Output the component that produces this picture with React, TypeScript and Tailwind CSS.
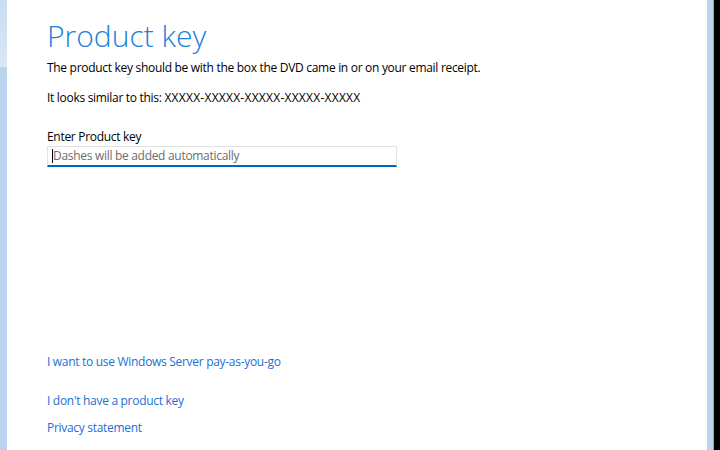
export default function App() {
  return (
    <div className="flex h-[450px] w-[720px] bg-white" style={{ fontFamily: '"Open Sans", "Noto Sans", sans-serif' }}>
      <div className="flex w-[7px] flex-col bg-[#bbd4ee]">
        <div className="h-[67px] bg-gradient-to-b from-[#c8dcf1] to-[#d9e7f6]" />
      </div>
      <div className="flex flex-1 flex-col pl-[40px] tracking-[-0.3px]">
        <h1 className="mt-[14px] text-[30px] font-light leading-[44px] tracking-normal text-[#2180d8]" style={{ fontFamily: '"Open Sans", sans-serif' }}>
          Product key
        </h1>
        <p className="mt-[2px] text-[12px] leading-[16px] text-black">
          The product key should be with the box the DVD came in or on your email receipt.
        </p>
        <p className="mt-[14px] text-[12px] leading-[16px] text-black">
          It looks similar to this: <span className="tracking-[0.25px]">XXXXX-XXXXX-XXXXX-XXXXX-XXXXX</span>
        </p>
        <label className="mt-[23px] text-[12px] leading-[16px] text-black">Enter Product key</label>
        <div className="mt-[1px] flex h-[21px] w-[350px] items-center border border-b-2 border-[#e2e2e2] border-b-[#0067c0] pl-[4px]">
          <span className="h-[14px] w-px bg-black" />
          <span className="text-[12px] leading-[16px] text-[#6d6d6d]">Dashes will be added automatically</span>
        </div>
        <div className="flex-1" />
        <a className="text-[12px] leading-[16px] text-[#1a6fd6]">I want to use Windows Server pay-as-you-go</a>
        <a className="mt-[23px] text-[12px] leading-[16px] text-[#1a6fd6]">I don&apos;t have a product key</a>
        <a className="mt-[11px] mb-[14px] text-[12px] leading-[16px] text-[#1a6fd6]">Privacy statement</a>
      </div>
      <div className="w-[6px] bg-[#bbd4ee]" />
      <div className="w-px bg-[#4fc3e8]" />
      <div className="w-[6px] bg-black" />
    </div>
  );
}
